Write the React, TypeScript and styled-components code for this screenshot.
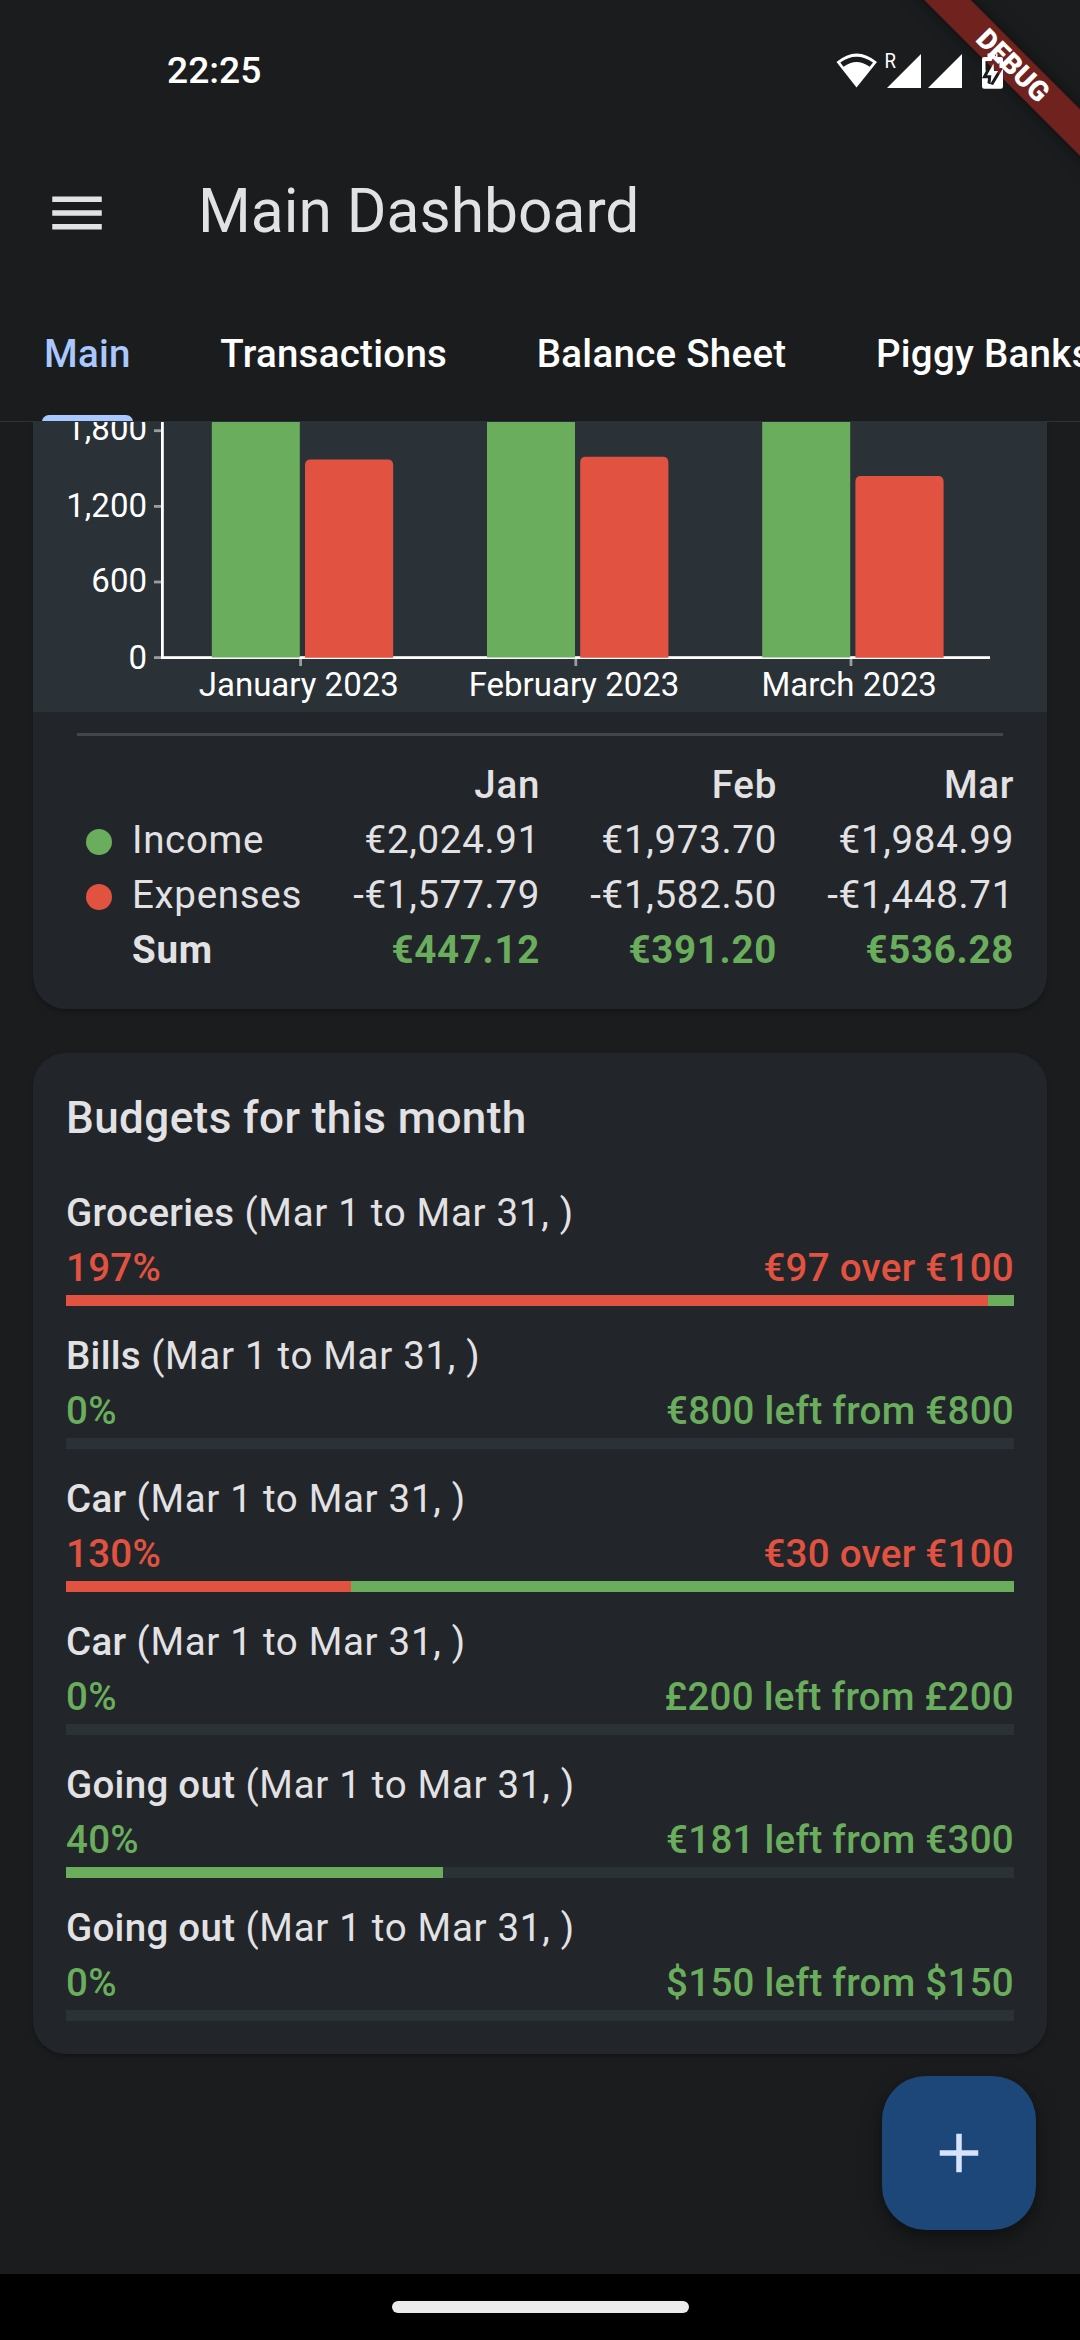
import React from "react";
import styled, { createGlobalStyle } from "styled-components";

const color = {
  surface: "#1b1c1e",
  card: "#222529",
  track: "#2a3137",
  text: "#e2e2e5",
  green: "#69ad5d",
  red: "#e15241",
  primary: "#a8c8ff",
};

const GlobalStyle = createGlobalStyle`
  * { box-sizing: border-box; }
  html, body { margin: 0; padding: 0; background: ${color.surface}; }
  body { font-family: Roboto, "Liberation Sans", sans-serif; }
`;

const Screen = styled.div`
  position: relative;
  display: flex;
  flex-direction: column;
  width: 1080px;
  height: 2340px;
  overflow: hidden;
  background: ${color.surface};
  color: ${color.text};
  font-size: 38.5px;
  line-height: 55px;
`;

const StatusBar = styled.header`
  display: flex;
  justify-content: space-between;
  height: 125px;
  padding: 43px 77px 0 167px;
  color: #fff;
`;

const Clock = styled.span`
  font-size: 37.2px;
  font-weight: 500;
`;

const StatusIcons = styled.svg`
  position: relative;
  z-index: 3;
  width: 170px;
  height: 48px;
`;

const Ribbon = styled.div`
  position: absolute;
  z-index: 2;
  top: 48.5px;
  left: 883.3px;
  width: 260px;
  height: 33px;
  transform: rotate(45deg);
  background: #70221f;
  box-shadow: 0 0 16px rgba(0, 0, 0, 0.5);
`;

const RibbonText = styled(Ribbon)`
  z-index: 4;
  background: none;
  box-shadow: none;
  color: #fff;
  font-size: 28px;
  font-weight: 900;
  line-height: 33px;
  text-align: center;
`;

const AppBar = styled.div`
  display: flex;
  align-items: center;
  gap: 88px;
  height: 176px;
  padding-left: 44px;
`;

const MenuIcon = styled.svg`
  width: 66px;
  height: 66px;
  fill: ${color.text};
`;

const Title = styled.h1`
  margin: 0 0 4px;
  font-size: 60.5px;
  font-weight: 400;
  line-height: 77px;
`;

const Tabs = styled.nav`
  display: flex;
  flex: none;
  gap: 89.5px;
  height: 121px;
  padding: 25px 44px 0;
  overflow: hidden;
  border-bottom: 1px solid ${color.track};
`;

const Tab = styled.div<{ $active?: boolean }>`
  display: flex;
  flex: none;
  flex-direction: column;
  justify-content: space-between;
  color: ${(p) => (p.$active ? color.primary : "#fff")};
  font-weight: 500;
  letter-spacing: 0.275px;
  white-space: nowrap;
`;

const Indicator = styled.i`
  height: 7px;
  margin: 0 -2px -1px;
  border-radius: 8px 8px 0 0;
  background: ${color.primary};
`;

const Content = styled.main`
  display: flex;
  flex: 1;
  flex-direction: column;
  gap: 44px;
  padding: 0 33px;
`;

const Card = styled.section<{ $cut?: boolean }>`
  border-radius: ${(p) => (p.$cut ? "0 0 33px 33px" : "33px")};
  background: ${color.card};
  box-shadow: 0 3px 4px rgba(0, 0, 0, 0.25);
`;

const ChartCard = styled(Card)`
  height: 587px;
`;

const Chart = styled.svg`
  display: block;
  width: 1014px;
  height: 290px;
  background: ${color.track};
  font-size: 33px;
  fill: #fff;
`;

const Divider = styled.hr`
  height: 3px;
  margin: 21px 44px;
  border: 0;
  background: #43474b;
`;

const Table = styled.div`
  display: grid;
  grid-template-columns: repeat(4, 237px);
  grid-auto-rows: 55px;
  padding: 0 33px;
  letter-spacing: 0.6875px;
`;

const Cell = styled.div<{ $weight?: number; $tone?: string }>`
  color: ${(p) => p.$tone ?? color.text};
  font-weight: ${(p) => p.$weight ?? 400};
  text-align: right;
  white-space: nowrap;
`;

const RowLabel = styled.div<{ $weight?: number }>`
  display: grid;
  grid-template-columns: 66px 1fr;
  align-items: center;
  font-weight: ${(p) => p.$weight ?? 400};
`;

const Dot = styled.i<{ $tone: string }>`
  width: 26px;
  height: 26px;
  margin: 4px 0 0 20px;
  border-radius: 50%;
  background: ${(p) => p.$tone};
`;

const BudgetCard = styled(Card)`
  display: flex;
  flex-direction: column;
  gap: 22px;
  padding: 32px 33px 33px;
`;

const CardTitle = styled.h2`
  margin: 0 0 12px;
  font-size: 44px;
  font-weight: 500;
  letter-spacing: 0.4125px;
  line-height: 66px;
`;

const Budget = styled.article`
  display: flex;
  flex-direction: column;
  letter-spacing: 0.6875px;
`;

const BudgetName = styled.b`
  font-weight: 500;
  letter-spacing: 0.275px;
`;

const Amounts = styled.div<{ $tone: string }>`
  display: flex;
  justify-content: space-between;
  color: ${(p) => p.$tone};
  font-weight: 500;
  letter-spacing: 0.275px;
`;

const Track = styled.div<{ $over: boolean }>`
  height: 11px;
  background: ${(p) => (p.$over ? color.green : color.track)};
`;

const Fill = styled.div<{ $over: boolean }>`
  height: 100%;
  background: ${(p) => (p.$over ? color.red : color.green)};
`;

const Fab = styled.button`
  position: absolute;
  top: 2076px;
  left: 882px;
  display: grid;
  place-items: center;
  width: 154px;
  height: 154px;
  padding: 0;
  border: 0;
  border-radius: 44px;
  background: #1c4778;
  box-shadow: 0 10px 24px rgba(0, 0, 0, 0.3), 0 4px 8px rgba(0, 0, 0, 0.2);
`;

const PlusIcon = styled.svg`
  width: 66px;
  height: 66px;
  fill: #d6e3ff;
`;

const NavBar = styled.footer`
  display: flex;
  flex: none;
  justify-content: center;
  height: 66px;
  padding-top: 27px;
  background: #000;
`;

const HomePill = styled.div`
  width: 297px;
  height: 12px;
  border-radius: 6px;
  background: #ebebeb;
`;

const months = [
  { short: "Jan", name: "January 2023", income: "€2,024.91", expenses: "-€1,577.79", sum: "€447.12", top: 37.5 },
  { short: "Feb", name: "February 2023", income: "€1,973.70", expenses: "-€1,582.50", sum: "€391.20", top: 34.7 },
  { short: "Mar", name: "March 2023", income: "€1,984.99", expenses: "-€1,448.71", sum: "€536.28", top: 54 },
];

const yTicks = [
  { label: "1,800", y: 8.7, base: 18 },
  { label: "1,200", y: 84.4, base: 95 },
  { label: "600", y: 160, base: 170 },
  { label: "0", y: 235.6, base: 247 },
];

const budgets = [
  { name: "Groceries", percent: "197%", amount: "€97 over €100", fill: 97.26, over: true },
  { name: "Bills", percent: "0%", amount: "€800 left from €800", fill: 0, over: false },
  { name: "Car", percent: "130%", amount: "€30 over €100", fill: 30.1, over: true },
  { name: "Car", percent: "0%", amount: "£200 left from £200", fill: 0, over: false },
  { name: "Going out", percent: "40%", amount: "€181 left from €300", fill: 39.75, over: false },
  { name: "Going out", percent: "0%", amount: "$150 left from $150", fill: 0, over: false },
];

const bolt = "M993.500 63.500L987 75.200H991.300L990.500 83.500L998 71H994Z";

function IncomeChart() {
  return (
    <Chart viewBox="33 0 1014 290">
      {yTicks.map((t) => (
        <React.Fragment key={t.label}>
          <rect x={154} y={t.y - 1.4} width={8} height={2.8} fill="#9a9c9e" />
          <text x={147} y={t.base} textAnchor="end">{t.label}</text>
        </React.Fragment>
      ))}
      <rect x={161} y={0} width={2.8} height={237} />
      <rect x={161} y={234.2} width={829} height={2.8} />
      {months.map((m, i) => {
        const x = 211.8 + i * 275.2;
        const h = 235 - m.top;
        return (
          <React.Fragment key={m.name}>
            <rect x={x + 87.4} y={237} width={2.8} height={7} fill="#9a9c9e" />
            <rect x={x} y={-10} width={88} height={245.5} fill={color.green} />
            <path
              d={`M${x + 93.2} ${m.top + h + 0.7}v${-h + 5}q0 -5.7 5.5 -5.7h77.2q5.5 0 5.5 5.7v${h - 5}z`}
              fill={color.red}
            />
            <text x={x + 87} y={273.7} textAnchor="middle">{m.name}</text>
          </React.Fragment>
        );
      })}
    </Chart>
  );
}

export default function App() {
  return (
    <Screen>
      <GlobalStyle />
      <StatusBar>
        <Clock>22:25</Clock>
        <StatusIcons viewBox="833 43 170 48" fill="#fff">
          <path d="M836.5 62Q856.5 45 877 62L856.5 87.5Z" />
          <path d="M840.3 62.500Q856.500 51 873 62.500L869.700 66.800Q856.500 57.200 843.500 66.800Z" fill={color.surface} />
          <text x="884.5" y="68" fontSize="21" textLength="11.5" lengthAdjust="spacingAndGlyphs">R</text>
          <path d="M887 88L921 54V88ZM928 88L962 54V88Z" />
          <mask id="charge" maskUnits="userSpaceOnUse" x="980" y="50" width="25" height="42">
            <path d="M987.500 57V53.500H997.500V57H1001Q1003 57 1003 59V86.500Q1003 88.700 1000.800 88.700H984.200Q982 88.700 982 86.500V59Q982 57 984 57Z" fill="#fff" />
            <rect x="985.5" y="61" width="14" height="9.5" fill="#000" />
            <path d={bolt} fill="#000" stroke="#000" strokeWidth="6" />
            <path d={bolt} fill="#fff" />
          </mask>
          <rect x="980" y="50" width="25" height="42" mask="url(#charge)" />
        </StatusIcons>
      </StatusBar>
      <Ribbon />
      <RibbonText>DEBUG</RibbonText>
      <AppBar>
        <MenuIcon viewBox="0 0 24 24"><path d="M3 18h18v-2H3v2zm0-5h18v-2H3v2zm0-7v2h18V6H3z" /></MenuIcon>
        <Title>Main Dashboard</Title>
      </AppBar>
      <Tabs>
        <Tab $active>Main<Indicator /></Tab>
        <Tab>Transactions</Tab>
        <Tab>Balance Sheet</Tab>
        <Tab>Piggy Banks</Tab>
      </Tabs>
      <Content>
        <ChartCard $cut>
          <IncomeChart />
          <Divider />
          <Table>
            <RowLabel />
            {months.map((m) => <Cell key={m.short} $weight={500}>{m.short}</Cell>)}
            <RowLabel><Dot $tone={color.green} />Income</RowLabel>
            {months.map((m) => <Cell key={m.short}>{m.income}</Cell>)}
            <RowLabel><Dot $tone={color.red} />Expenses</RowLabel>
            {months.map((m) => <Cell key={m.short}>{m.expenses}</Cell>)}
            <RowLabel $weight={700}><span />Sum</RowLabel>
            {months.map((m) => <Cell key={m.short} $weight={700} $tone={color.green}>{m.sum}</Cell>)}
          </Table>
        </ChartCard>
        <BudgetCard>
          <CardTitle>Budgets for this month</CardTitle>
          {budgets.map((b, i) => (
            <Budget key={i}>
              <div><BudgetName>{b.name}</BudgetName> (Mar 1 to Mar 31, )</div>
              <Amounts $tone={b.over ? color.red : color.green}>
                <span>{b.percent}</span>
                <span>{b.amount}</span>
              </Amounts>
              <Track $over={b.over}><Fill $over={b.over} style={{ width: `${b.fill}%` }} /></Track>
            </Budget>
          ))}
        </BudgetCard>
      </Content>
      <Fab aria-label="Add"><PlusIcon viewBox="0 0 24 24"><path d="M19 13h-6v6h-2v-6H5v-2h6V5h2v6h6v2z" /></PlusIcon></Fab>
      <NavBar><HomePill /></NavBar>
    </Screen>
  );
}
